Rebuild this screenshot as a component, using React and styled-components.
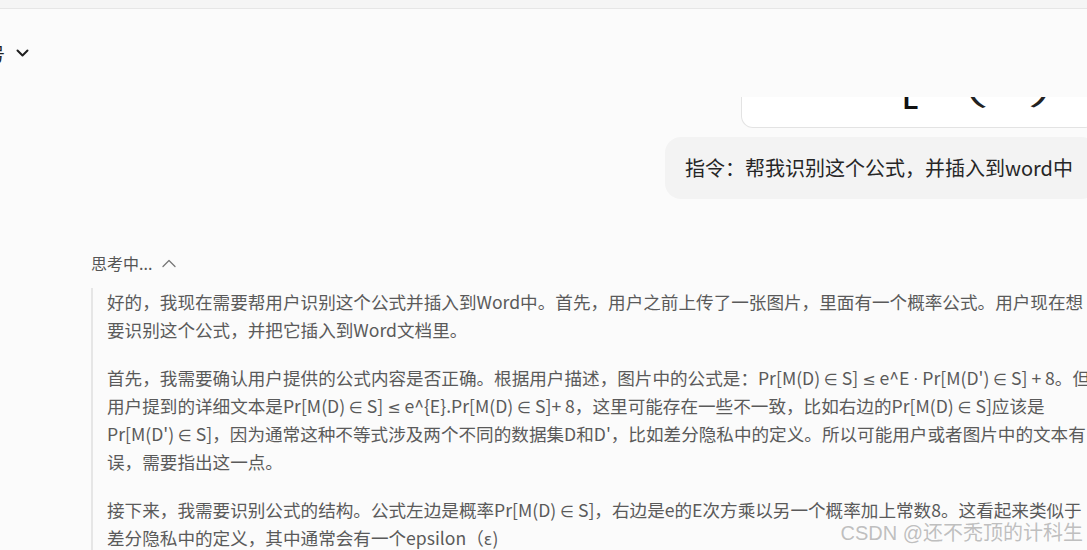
import React from "react";
import styled, { createGlobalStyle } from "styled-components";

const FONT_STACK = `"Noto Sans CJK SC", "Noto Sans", sans-serif`;

const GlobalStyle = createGlobalStyle`
  html, body {
    margin: 0;
    padding: 0;
    background: #fbfbfb;
    overflow: hidden;
  }
  body {
    font-family: ${FONT_STACK};
  }
  #root {
    width: 1087px;
    height: 550px;
    overflow: hidden;
  }
`;

const Page = styled.div`
  position: relative;
  width: 1087px;
  height: 550px;
  overflow: hidden;
  background: #fbfbfb;
  display: flex;
  flex-direction: column;
`;

const TopStrip = styled.div`
  flex: none;
  height: 8px;
  background: #f5f5f5;
  border-bottom: 1px solid #e6e6e6;
`;

const Header = styled.header`
  flex: none;
  height: 88px;
  display: flex;
  align-items: center;
`;

const ModelPicker = styled.button`
  display: flex;
  align-items: center;
  gap: 11px;
  margin-left: -13px;
  padding: 0;
  border: 0;
  background: none;
  font: 400 18px/24px ${FONT_STACK};
  color: #1f1f1f;
`;

const Chat = styled.main`
  flex: none;
  width: 1006px;
  margin-left: 91px;
  display: flex;
  flex-direction: column;
`;

const ImageCard = styled.div`
  align-self: flex-end;
  width: 354px;
  height: 30px;
  background: #ffffff;
  border: 1px solid #e3e3e3;
  border-top: none;
  border-radius: 0 0 12px 12px;
  overflow: hidden;
  svg {
    display: block;
  }
`;

const UserBubble = styled.div`
  align-self: flex-end;
  margin-top: 9px;
  padding: 16px 24px 16px 20px;
  background: #f3f3f3;
  border-radius: 16px;
  font-size: 20px;
  line-height: 30px;
  color: #262626;
  white-space: nowrap;
`;

const ThinkToggle = styled.div`
  margin-top: 52px;
  display: flex;
  align-items: center;
  gap: 10px;
  font-size: 16px;
  line-height: 24px;
  color: #555555;
`;

const Thought = styled.section`
  margin-top: 13px;
  border-left: 2px solid #e6e6e6;
  padding-left: 14px;
  font-size: 17.6px;
  line-height: 28px;
  color: #5a5a5a;
`;

const Para = styled.p`
  margin: 0;
  & + & {
    margin-top: 20px;
  }
`;

const Line = styled.span`
  display: block;
  height: 28px;
  line-height: 28px;
  white-space: nowrap;
`;

const MathSym = styled.span`
  font-family: "DejaVu Sans", sans-serif;
  font-size: 0.9em;
  line-height: 1;
`;

const Watermark = styled.div`
  position: absolute;
  right: 4px;
  bottom: 5px;
  font-family: "Liberation Sans", "Noto Sans CJK SC", sans-serif;
  font-size: 20px;
  line-height: 24px;
  color: rgba(175, 175, 175, 0.8);
  pointer-events: none;
`;

const paragraphs = [
  [
    "好的，我现在需要帮用户识别这个公式并插入到Word中。首先，用户之前上传了一张图片，里面有一个概率公式。用户现在想",
    "要识别这个公式，并把它插入到Word文档里。",
  ],
  [
    "首先，我需要确认用户提供的公式内容是否正确。根据用户描述，图片中的公式是：Pr[M(D) ∈ S] ≤ e^E · Pr[M(D') ∈ S] + 8。但",
    "用户提到的详细文本是Pr[M(D) ∈ S] ≤ e^{E}.Pr[M(D) ∈ S]+ 8，这里可能存在一些不一致，比如右边的Pr[M(D) ∈ S]应该是",
    "Pr[M(D') ∈ S]，因为通常这种不等式涉及两个不同的数据集D和D'，比如差分隐私中的定义。所以可能用户或者图片中的文本有",
    "误，需要指出这一点。",
  ],
  [
    "接下来，我需要识别公式的结构。公式左边是概率Pr[M(D) ∈ S]，右边是e的E次方乘以另一个概率加上常数8。这看起来类似于",
    "差分隐私中的定义，其中通常会有一个epsilon（ε)",
  ],
];

const renderLine = (text) =>
  text.split(/([∈≤·ε])/).map((part, k) =>
    /^[∈≤·ε]$/.test(part) ? <MathSym key={k}>{part}</MathSym> : part
  );

const ChevronDown = () => (
  <svg width="13" height="9" viewBox="0 0 13 9" fill="none">
    <polyline points="1.5,1.5 6.5,6.5 11.5,1.5" stroke="#1f1f1f" strokeWidth="2" strokeLinecap="round" strokeLinejoin="round" />
  </svg>
);

const ChevronUp = () => (
  <svg width="14" height="9" viewBox="0 0 14 9" fill="none">
    <polyline points="1,7.5 7,1.5 13,7.5" stroke="#777" strokeWidth="1.3" strokeLinecap="round" strokeLinejoin="round" />
  </svg>
);

const FormulaPeek = () => (
  <svg width="354" height="30" viewBox="0 0 354 30">
    <text x="161" y="12" fontFamily="Liberation Sans, sans-serif" fontWeight="700" fontSize="25" fill="#111">L</text>
    <text x="228" y="4" fontFamily="Liberation Sans, sans-serif" fontSize="40" fill="#222" transform="rotate(-22 236 4)">(</text>
    <text x="291" y="4" fontFamily="Liberation Sans, sans-serif" fontSize="40" fill="#222" transform="rotate(22 298 4)">)</text>
  </svg>
);

export default function App() {
  return (
    <>
      <GlobalStyle />
      <Page>
        <TopStrip />
        <Header>
          <ModelPicker>
            <span>号</span>
            <ChevronDown />
          </ModelPicker>
        </Header>
        <Chat>
          <ImageCard>
            <FormulaPeek />
          </ImageCard>
          <UserBubble>指令：帮我识别这个公式，并插入到word中</UserBubble>
          <ThinkToggle>
            <span>思考中...</span>
            <ChevronUp />
          </ThinkToggle>
          <Thought>
            {paragraphs.map((lines, i) => (
              <Para key={i}>
                {lines.map((l, j) => (
                  <Line key={j}>{renderLine(l)}</Line>
                ))}
              </Para>
            ))}
          </Thought>
        </Chat>
        <Watermark>CSDN @还不秃顶的计科生</Watermark>
      </Page>
    </>
  );
}
